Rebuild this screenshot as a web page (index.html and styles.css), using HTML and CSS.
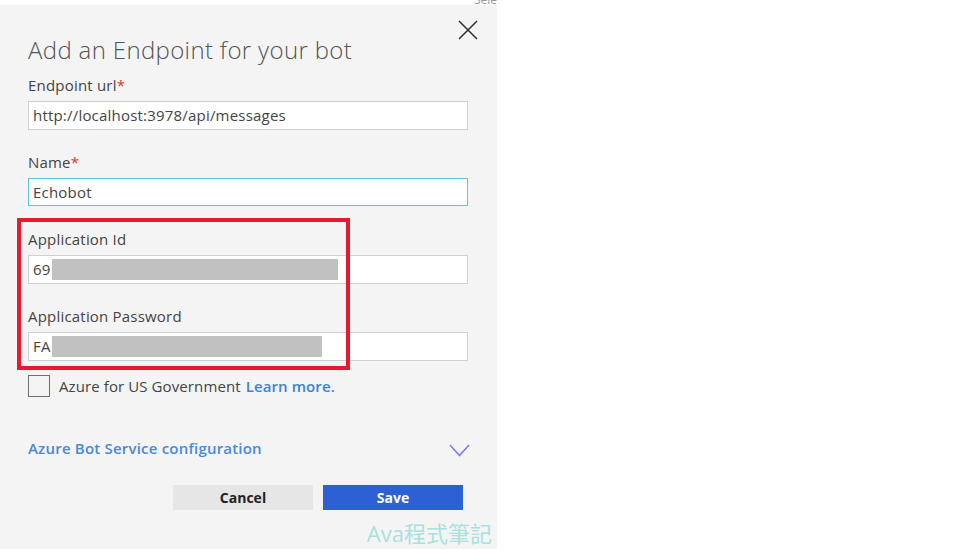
FILE: index.html
```html
<!DOCTYPE html>
<html>
<head>
<meta charset="utf-8">
<link rel="stylesheet" href="styles.css">
</head>
<body>
<div class="topstrip"><span class="peek">Sele</span></div>
<div class="dialog">
  <div class="header">
    <h1 class="title">Add an Endpoint for your bot</h1>
    <button class="close" aria-label="Close">
      <svg width="20" height="20" viewBox="0 0 20 20"><path d="M1 1 L19 19 M19 1 L1 19" stroke="#333" stroke-width="1.6" fill="none"/></svg>
    </button>
  </div>
  <div class="field f1">
    <label class="label">Endpoint url<span class="req">*</span></label>
    <div class="input">http://localhost:3978/api/messages</div>
  </div>
  <div class="field f2">
    <label class="label">Name<span class="req">*</span></label>
    <div class="input focus">Echobot</div>
  </div>
  <div class="field f3">
    <label class="label">Application Id</label>
    <div class="input">69<span class="blur b1"></span></div>
  </div>
  <div class="field f4">
    <label class="label">Application Password</label>
    <div class="input">FA<span class="blur b2"></span></div>
  </div>
  <div class="highlight"></div>
  <div class="checkrow">
    <span class="checkbox"></span>
    <span class="checktext">Azure for US Government</span>
    <a class="learn">Learn more.</a>
  </div>
  <div class="config">
    <span class="configtext">Azure Bot Service configuration</span>
    <svg class="chev" width="21" height="13" viewBox="0 0 21 13"><polyline points="1,1 10.5,11.5 20,1" stroke="#7d7df2" stroke-width="1.6" fill="none"/></svg>
  </div>
  <div class="buttons">
    <button class="btn cancel">Cancel</button>
    <button class="btn save">Save</button>
  </div>
  <div class="watermark">Ava程式筆記</div>
</div>
</body>
</html>
```
FILE: styles.css
```css
html, body {
  margin: 0;
  padding: 0;
  background: #ffffff;
}
body {
  font-family: "Open Sans", "Noto Sans", sans-serif;
  color: #444;
}
.topstrip {
  height: 5px;
  width: 500px;
  position: relative;
  overflow: hidden;
}
.peek {
  position: absolute;
  left: 474px;
  top: -9px;
  font-size: 12px;
  color: #999;
}
.dialog {
  position: relative;
  width: 497px;
  height: 544px;
  background: #f4f4f4;
  box-sizing: border-box;
  padding: 0 30px 0 28px;
}
.header {
  display: flex;
  justify-content: space-between;
  align-items: flex-start;
}
.title {
  margin: 29px 0 0 0;
  font-size: 24px;
  letter-spacing: 0.35px;
  line-height: 32px;
  font-weight: 300;
  color: #555;
}
.close {
  margin: 15px -11px 0 0;
  padding: 0;
  border: 0;
  background: none;
  width: 20px;
  height: 20px;
  display: flex;
}
.field {
  display: flex;
  flex-direction: column;
}
.label {
  font-size: 15px;
  letter-spacing: 0.2px;
  line-height: 20px;
  color: #444;
}
.req {
  color: #d9342b;
}
.input {
  margin-top: 6px;
  width: 440px;
  height: 29px;
  box-sizing: border-box;
  background: #fff;
  border: 1px solid #d0d0d0;
  font-size: 15px;
  letter-spacing: 0.2px;
  line-height: 27px;
  padding-left: 4px;
  color: #444;
  display: flex;
  align-items: center;
}
.input.focus {
  border: 1.5px solid #58c4ea;
  height: 28px;
}
.f1 { margin-top: 9px; }
.f2 { margin-top: 22px; }
.f3 { margin-top: 23px; }
.f4 { margin-top: 22px; }
.blur {
  display: inline-block;
  background: #c1c1c1;
  height: 21px;
  margin-left: 1px;
}
.b1 { width: 286px; }
.b2 { width: 270px; }
.highlight {
  position: absolute;
  left: 17px;
  top: 213px;
  width: 333px;
  height: 152px;
  box-sizing: border-box;
  border: 4px solid #e8192c;
}
.checkrow {
  margin-top: 14px;
  display: flex;
  align-items: center;
  height: 22px;
  font-size: 15px;
  letter-spacing: 0.1px;
}
.checkbox {
  width: 22px;
  height: 22px;
  box-sizing: border-box;
  border: 1px solid #6e6e6e;
  margin-right: 9px;
}
.checktext {
  color: #444;
}
.learn {
  margin-left: 5px;
  color: #3b82d6;
  font-weight: 600;
}
.config {
  margin-top: 41px;
  height: 20px;
  display: flex;
  align-items: center;
  justify-content: space-between;
}
.configtext {
  color: #4a89d8;
  font-weight: 600;
  font-size: 15px;
  letter-spacing: 0.2px;
}
.chev {
  margin-right: -3px;
  margin-top: 4px;
}
.buttons {
  margin-top: 27px;
  display: flex;
  justify-content: flex-end;
  gap: 10px;
  padding-right: 4px;
}
.btn {
  width: 140px;
  height: 25px;
  border: 0;
  font-family: "Open Sans", "Noto Sans", sans-serif;
  font-weight: 700;
  font-size: 14px;
  padding: 0;
}
.cancel {
  background: #e6e6e6;
  color: #222;
}
.save {
  background: #2d5fd5;
  color: #fff;
}
.watermark {
  margin-top: 11px;
  text-align: right;
  margin-right: -25px;
  font-family: "Open Sans", "Noto Sans CJK TC", sans-serif;
  font-size: 22px;
  line-height: 24px;
  color: #a9e0e0;
}
```
